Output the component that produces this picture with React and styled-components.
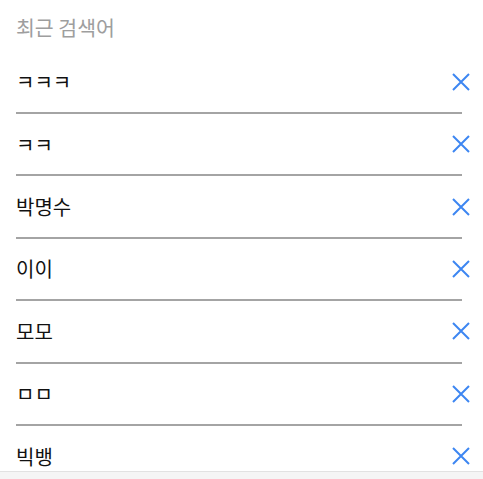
import React, { useState } from "react";
import styled, { createGlobalStyle } from "styled-components";

const GlobalStyle = createGlobalStyle`
  body {
    margin: 0;
    background: #fff;
    font-family: "Noto Sans CJK KR", "Noto Sans", sans-serif;
  }
`;

const Container = styled.div`
  width: 100%;
  padding: 0 21px 0 16px;
  box-sizing: border-box;
`;

const Heading = styled.h2`
  margin: 0;
  height: 51.6px;
  padding-top: 2px;
  box-sizing: border-box;
  display: flex;
  align-items: center;
  font-size: 20.5px;
  font-weight: 400;
  color: #9e9e9e;
`;

const List = styled.ul`
  list-style: none;
  margin: 0;
  padding: 0;
`;

const Row = styled.li`
  height: 62.4px;
  box-sizing: border-box;
  display: flex;
  align-items: center;
  justify-content: space-between;
  border-bottom: 2px solid #a4a4a4;
`;

const Keyword = styled.span`
  font-size: 20px;
  color: #111;
`;

const DeleteButton = styled.button`
  border: none;
  background: none;
  padding: 0;
  margin-right: -8px;
  width: 18px;
  height: 18px;
  display: flex;
  cursor: pointer;
`;

const BottomBar = styled.div`
  position: fixed;
  left: 0;
  right: 0;
  bottom: 0;
  height: 7px;
  background: #f5f5f5;
  border-top: 1px solid #e2e2e2;
`;

const initial = ["ㅋㅋㅋ", "ㅋㅋ", "박명수", "이이", "모모", "ㅁㅁ", "빅뱅"];

function App() {
  const [keywords, setKeywords] = useState(initial);

  return (
    <>
      <GlobalStyle />
      <Container>
        <Heading>최근 검색어</Heading>
        <List>
          {keywords.map((word, i) => (
            <Row key={i}>
              <Keyword>{word}</Keyword>
              <DeleteButton
                onClick={() => setKeywords(keywords.filter((_, j) => j !== i))}
              >
                <svg width="18" height="18" viewBox="0 0 18 18">
                  <path
                    d="M1 1 L17 17 M17 1 L1 17"
                    stroke="#3d86f2"
                    strokeWidth="2"
                    fill="none"
                  />
                </svg>
              </DeleteButton>
            </Row>
          ))}
        </List>
      </Container>
      <BottomBar />
    </>
  );
}

export default App;
